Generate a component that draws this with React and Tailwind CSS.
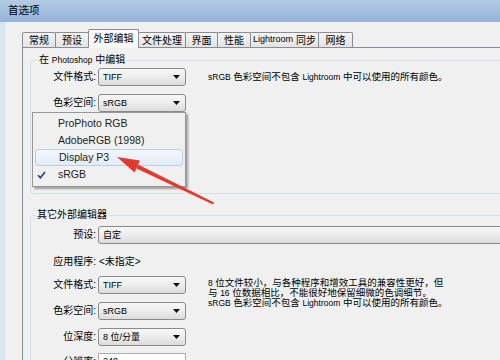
import React from "react";

function Caret() {
  return (
    <svg width="7" height="4" viewBox="0 0 7 4" className="shrink-0">
      <path d="M0 0h7L3.5 4z" fill="#111" />
    </svg>
  );
}

// small latin run inside CJK text
function L({ children }) {
  return <span className="text-[8.5px]">{children}</span>;
}

function Select({ value, className = "" }) {
  return (
    <div
      className={`h-[18px] flex items-center justify-between border border-[#8a8a8a] rounded-[3px] bg-gradient-to-b from-[#f8f8f8] via-[#ececec] to-[#dcdcdc] pl-[4px] pr-[5px] ${className}`}
    >
      <span className="text-[9px] leading-none">{value}</span>
      <Caret />
    </div>
  );
}

function Row({ label, children, className = "" }) {
  return (
    <div className={`flex items-center h-[18px] ${className}`}>
      <div className="w-[67px] shrink-0 pr-[2px] text-right text-[10px] leading-none">
        {label}
      </div>
      {children}
    </div>
  );
}

const tabs = [
  { label: "常规", w: "w-[34px]" },
  { label: "预设", w: "w-[34px]" },
  { label: "外部编辑", w: "w-[51px]", active: true },
  { label: "文件处理", w: "w-[48px]" },
  { label: "界面", w: "w-[33px]" },
  { label: "性能", w: "w-[34px]" },
  { label: <><span className="text-[9px] mr-[3px]">Lightroom</span>同步</>, w: "w-[69px]" },
  { label: "网络", w: "w-[35px]" },
];

export default function App() {
  return (
    <div className="w-[500px] h-[360px] overflow-hidden relative bg-[#f0f0f0] text-black font-['Liberation_Sans','Noto_Sans_CJK_SC',sans-serif] flex flex-col">
      {/* title bar */}
      <div className="h-[22px] shrink-0 bg-gradient-to-b from-[#b3cbe5] to-[#94b3d6] flex items-center pl-[8px] text-[10.5px]">
        首选项
      </div>

      <div className="flex flex-1">
        <div className="w-[5px] shrink-0 bg-[#dae4f0]" />

        <div className="flex-1 flex flex-col pt-[7px] pl-[17px]">
          {/* tabs */}
          <div className="flex items-end h-[18px] relative z-10">
            {tabs.map((t, i) =>
              t.active ? (
                <div
                  key={i}
                  className={`${t.w} h-[19px] -ml-px -mb-px bg-[#fbfbfb] border border-b-0 border-[#898c95] rounded-t-[2px] flex items-center justify-center text-[10px] pb-[2px] relative z-10`}
                >
                  {t.label}
                </div>
              ) : (
                <div
                  key={i}
                  className={`${t.w} h-[15px] ${i === 0 ? "" : "-ml-px"} bg-gradient-to-b from-[#f4f4f4] to-[#e3e3e3] border border-b-0 border-[#898c95] rounded-t-[2px] flex items-center justify-center text-[10px]`}
                >
                  {t.label}
                </div>
              )
            )}
          </div>

          {/* panel */}
          <div className="flex-1 border-t border-l border-[#898c95] pt-[5px] pl-[7px]">
            <fieldset className="border border-[#d5dfe5] rounded-[3px] mr-[-20px] pb-[81px]">
              <legend className="ml-[6px] px-[2px] text-[10px] leading-[14px]">
                在 <L>Photoshop</L> 中编辑
              </legend>
              <Row label="文件格式:" className="mt-[1px]">
                <Select value="TIFF" className="w-[88px]" />
                <div className="ml-[22px] text-[9.5px] leading-none whitespace-nowrap">
                  <L>sRGB</L> 色彩空间不包含 <L>Lightroom</L> 中可以使用的所有颜色。
                </div>
              </Row>
              <Row label="色彩空间:" className="mt-[8px]">
                <Select value="sRGB" className="w-[88px]" />
              </Row>
            </fieldset>

            <fieldset className="mt-[14px] border border-[#d5dfe5] rounded-[3px] mr-[-20px] pb-[20px]">
              <legend className="ml-[4px] px-[2px] text-[10px] leading-[14px]">其它外部编辑器</legend>
              <Row label="预设:" className="mt-[4px]">
                <Select value="自定" className="flex-1 text-[10px]" />
              </Row>
              <Row label="应用程序:" className="mt-[9px]">
                <span className="text-[10px] leading-none pl-[1px]">&lt;未指定&gt;</span>
              </Row>
              <div className="flex mt-[5px]">
                <div className="flex flex-col">
                  <Row label="文件格式:">
                    <Select value="TIFF" className="w-[88px]" />
                  </Row>
                  <Row label="色彩空间:" className="mt-[8px]">
                    <Select value="sRGB" className="w-[88px]" />
                  </Row>
                  <Row label="位深度:" className="mt-[8px]">
                    <Select value="8 位/分量" className="w-[88px]" />
                  </Row>
                  <Row label="分辨率:" className="mt-[7px]">
                    <div className="w-[88px] h-[18px] bg-white border border-[#abadb3] pl-[4px] flex items-center text-[9px]">
                      240
                    </div>
                  </Row>
                </div>
                <div className="ml-[22px] pt-[2px] text-[9.5px] leading-[10px] whitespace-nowrap">
                  <div><L>8</L> 位文件较小，与各种程序和增效工具的兼容性更好，但</div>
                  <div>与 <L>16</L> 位数据相比，不能很好地保留细微的色调细节。</div>
                  <div><L>sRGB</L> 色彩空间不包含 <L>Lightroom</L> 中可以使用的所有颜色。</div>
                </div>
              </div>
            </fieldset>
          </div>
        </div>
      </div>

      {/* open dropdown menu */}
      <div className="absolute left-[32px] top-[112px] w-[154px] z-20 bg-[#f0f0f0] border border-[#979797] shadow-[2px_2px_2px_rgba(0,0,0,0.35)] pt-[2px] pb-[3px] text-[10.5px] text-[#1e1e1e]">
        <div className="h-[17px] flex items-center pl-[25px]">ProPhoto RGB</div>
        <div className="h-[17px] flex items-center pl-[25px]">AdobeRGB (1998)</div>
        <div className="h-[17px] mx-[2px] flex items-center pl-[23px] border border-[#b8d0ec] rounded-[3px] bg-gradient-to-b from-[#f4f8fd] to-[#e2ebf7]">
          Display P3
        </div>
        <div className="h-[17px] flex items-center pl-[4px]">
          <svg width="9" height="8" viewBox="0 0 9 8" className="mr-[12px]">
            <path d="M1 4.2 L3.4 6.8 L8 1" fill="none" stroke="#1f3f9e" strokeWidth="1.6" />
          </svg>
          sRGB
        </div>
      </div>

      {/* red annotation arrow */}
      <svg className="absolute left-0 top-0 z-30 pointer-events-none" width="500" height="360" viewBox="0 0 500 360">
        <polygon points="214,202.5 213,204.5 136.5,168.5 138,164.5" fill="#e5392e" />
        <polygon points="117,157 140,160.5 134.5,172.5" fill="#e5392e" />
      </svg>
    </div>
  );
}
